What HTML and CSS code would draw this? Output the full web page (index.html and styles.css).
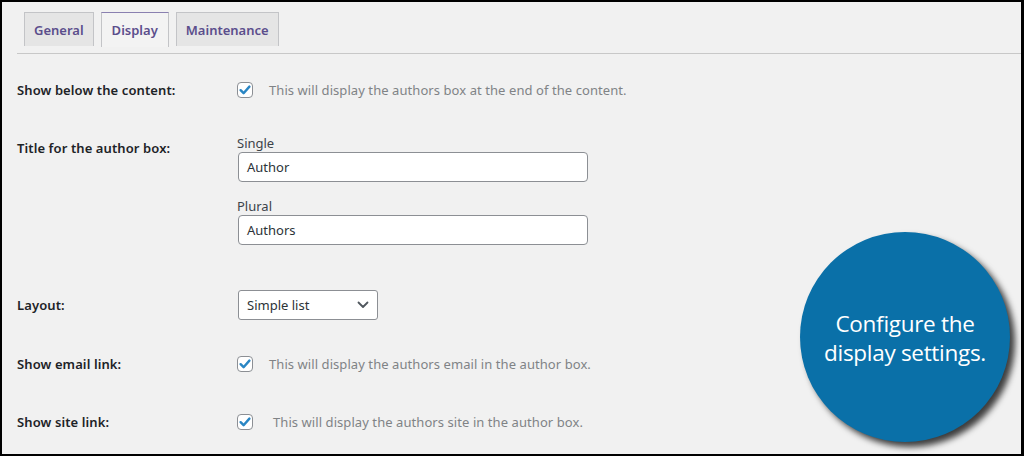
FILE: index.html
```html
<!DOCTYPE html>
<html>
<head>
<meta charset="utf-8">
<link rel="stylesheet" href="styles.css">
</head>
<body>
<div class="frame">
  <nav class="tabs">
    <span class="tab">General</span>
    <span class="tab active">Display</span>
    <span class="tab">Maintenance</span>
  </nav>
  <div class="rule"></div>
  <div class="settings">
    <div class="row r1">
      <div class="label">Show below the content:</div>
      <div class="field check-field">
        <span class="checkbox"><svg viewBox="0 0 16 16" width="16" height="16"><path d="M3.6 8.2 L6.6 11.2 L12.4 4.6" fill="none" stroke="#2a86c4" stroke-width="2.4" stroke-linecap="round" stroke-linejoin="round"/></svg></span>
        <span class="desc">This will display the authors box at the end of the content.</span>
      </div>
    </div>
    <div class="row r2">
      <div class="label lab2">Title for the author box:</div>
      <div class="field stack">
        <div class="sub">Single</div>
        <div class="input">Author</div>
        <div class="sub sub2">Plural</div>
        <div class="input">Authors</div>
      </div>
    </div>
    <div class="row r3">
      <div class="label">Layout:</div>
      <div class="field">
        <div class="select">Simple list<svg class="chev" viewBox="0 0 12 8" width="12" height="8"><path d="M1.5 1.5 L6 6 L10.5 1.5" fill="none" stroke="#50575e" stroke-width="1.8" stroke-linecap="round" stroke-linejoin="round"/></svg></div>
      </div>
    </div>
    <div class="row r4">
      <div class="label">Show email link:</div>
      <div class="field check-field">
        <span class="checkbox"><svg viewBox="0 0 16 16" width="16" height="16"><path d="M3.6 8.2 L6.6 11.2 L12.4 4.6" fill="none" stroke="#2a86c4" stroke-width="2.4" stroke-linecap="round" stroke-linejoin="round"/></svg></span>
        <span class="desc">This will display the authors email in the author box.</span>
      </div>
    </div>
    <div class="row r5">
      <div class="label">Show site link:</div>
      <div class="field check-field">
        <span class="checkbox"><svg viewBox="0 0 16 16" width="16" height="16"><path d="M3.6 8.2 L6.6 11.2 L12.4 4.6" fill="none" stroke="#2a86c4" stroke-width="2.4" stroke-linecap="round" stroke-linejoin="round"/></svg></span>
        <span class="desc desc-wide">This will display the authors site in the author box.</span>
      </div>
    </div>
  </div>
  <div class="callout">Configure the<br>display settings.</div>
</div>
</body>
</html>
```

FILE: styles.css
```css
* { box-sizing: border-box; }
html, body { margin: 0; padding: 0; }
body {
  width: 1024px;
  height: 456px;
  overflow: hidden;
  font-family: "Noto Sans", "Open Sans", sans-serif;
  color: #1d2327;
}
.frame {
  position: relative;
  width: 1024px;
  height: 456px;
  background: #f1f1f1;
  border: 2px solid #000;
  border-right-width: 3px;
}
.tabs {
  display: flex;
  gap: 7px;
  padding: 10px 0 0 22px;
  height: 45px;
}
.tab {
  display: flex;
  align-items: center;
  justify-content: center;
  height: 34px;
  padding: 0 9px;
  border: 1px solid #c3c4c7;
  border-bottom: none;
  background: #e5e5e5;
  color: #5b4e8c;
  font-size: 13px;
  font-weight: 600;
}
.tab.active {
  background: #f3f3f3;
  height: 35px;
  padding: 0 10px;
  border-top-color: #8a80b0;
}
.rule {
  margin: 6px 0 0 15px;
  height: 1px;
  background: #c8c8c8;
}
.settings {
  padding-left: 15px;
}
.row {
  display: flex;
}
.label {
  width: 220px;
  flex: none;
  font-size: 13px;
  font-weight: 600;
  line-height: 16px;
  color: #1d2327;
  letter-spacing: 0.1px;
}
.field { flex: 1; }
.check-field {
  display: flex;
  align-items: center;
  height: 16px;
}
.r1 { margin-top: 28px; height: 16px; align-items: center; }
.r2 { margin-top: 36px; }
.lab2 { margin-top: 6px; }
.r3 { margin-top: 45px; align-items: center; height: 30px; }
.r4 { margin-top: 36px; height: 16px; align-items: center; }
.r5 { margin-top: 42px; height: 16px; align-items: center; }
.checkbox {
  width: 16px;
  height: 16px;
  border: 1px solid #8c8f94;
  border-radius: 4px;
  background: #fff;
  display: flex;
  flex: none;
}
.checkbox svg { display: block; margin: -1px; }
.desc {
  margin-left: 16px;
  font-size: 13px;
  color: #808386;
  letter-spacing: 0.07px;
}
.desc-wide { margin-left: 20px; }
.stack { padding-left: 1px; }
.sub {
  font-size: 13px;
  line-height: 18px;
  color: #3c434a;
  margin-left: -1px;
}
.sub2 { margin-top: 15px; }
.input {
  width: 350px;
  height: 30px;
  border: 1px solid #8c8f94;
  border-radius: 4px;
  background: #fff;
  padding-left: 8px;
  display: flex;
  align-items: center;
  font-size: 13px;
  color: #2c3338;
}
.select {
  margin-left: 1px;
  width: 140px;
  height: 30px;
  border: 1px solid #8c8f94;
  border-radius: 3px;
  background: #fff;
  padding: 0 8px;
  display: flex;
  align-items: center;
  justify-content: space-between;
  font-size: 13px;
  color: #2c3338;
}
.chev { margin-right: 0; }
.callout {
  position: absolute;
  left: 798px;
  top: 230px;
  width: 210px;
  height: 210px;
  border-radius: 50%;
  background: #0a70a8;
  box-shadow: 5px 5px 6px rgba(0,0,0,0.75);
  color: #fff;
  font-family: "Open Sans", "Noto Sans", sans-serif;
  font-size: 22.5px;
  line-height: 29px;
  display: flex;
  align-items: center;
  justify-content: center;
  text-align: center;
  letter-spacing: -0.3px;
  padding-top: 2px;
}
```
